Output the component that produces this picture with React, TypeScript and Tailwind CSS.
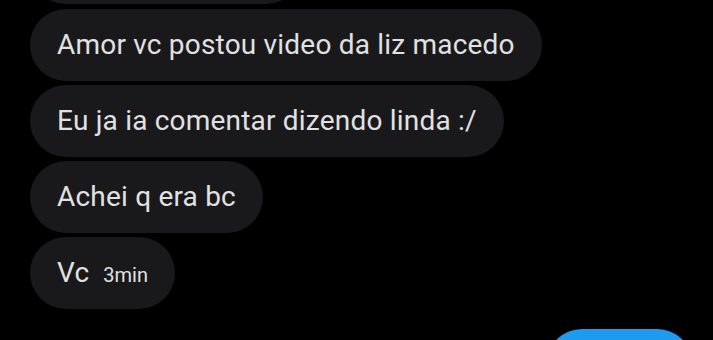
import React from "react";

interface BubbleProps {
  children: React.ReactNode;
  className?: string;
}

const Bubble = ({ children, className = "" }: BubbleProps) => {
  return (
    <div
      className={`self-start h-[72px] flex items-center px-[27px] rounded-full bg-[#19191b] text-[#e1e1e1] text-[28px] leading-none tracking-[0.2px] ${className}`}
    >
      {children}
    </div>
  );
};

const App = () => {
  return (
    <div
      className="w-[713px] h-[340px] overflow-hidden bg-black"
      style={{ fontFamily: "Roboto, 'Noto Sans', sans-serif" }}
    >
      <div className="flex flex-col gap-[4px] pl-[30px] -mt-[68px]">
        <div className="self-start h-[72px] w-[272px] rounded-full bg-[#19191b]" />
        <Bubble className="mt-[1px]">Amor vc postou video da liz macedo</Bubble>
        <Bubble>Eu ja ia comentar dizendo linda :/</Bubble>
        <Bubble>Achei q era bc</Bubble>
        <Bubble>
          <span>Vc</span>
          <span className="ml-[14px] text-[20px] tracking-normal translate-y-[2px]">3min</span>
        </Bubble>
      </div>
      <div className="flex justify-end pr-[20px] mt-[20px]">
        <div className="h-[72px] w-[147px] rounded-full bg-[#1d9bf0]" />
      </div>
    </div>
  );
};

export default App;
